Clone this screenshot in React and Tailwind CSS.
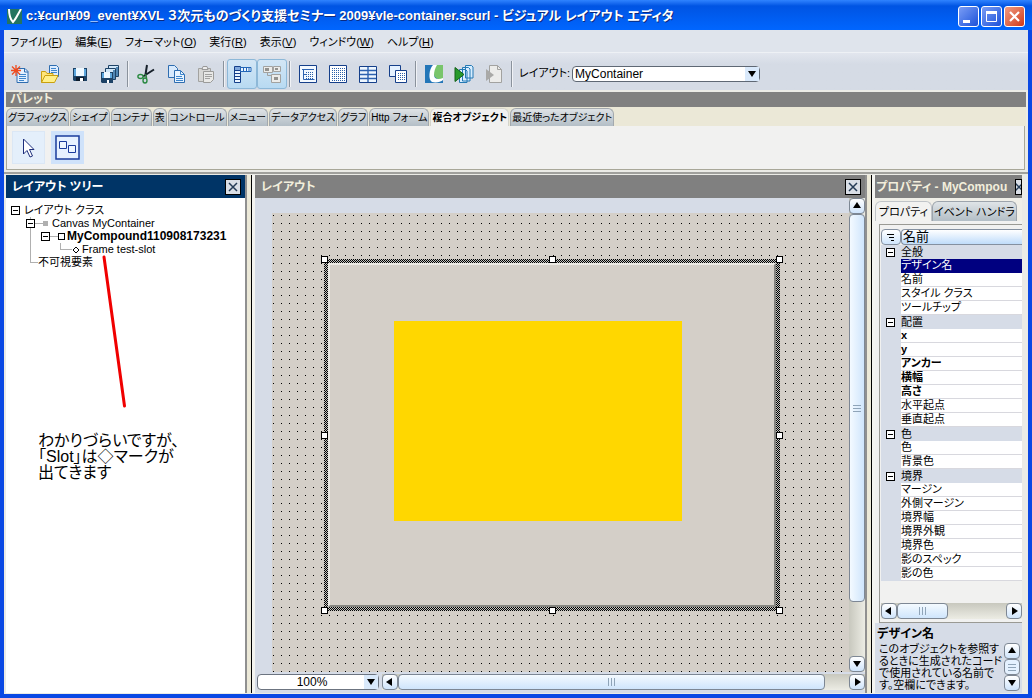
import React, { useState } from 'react';

const menus = [
  ['ファイル', 'F'],
  ['編集', 'E'],
  ['フォーマット', 'O'],
  ['実行', 'R'],
  ['表示', 'V'],
  ['ウィンドウ', 'W'],
  ['ヘルプ', 'H'],
];

const paletteTabs = [
  'グラフィックス',
  'シェイプ',
  'コンテナ',
  '表',
  'コントロール',
  'メニュー',
  'データアクセス',
  'グラフ',
  'Http フォーム',
  '複合オブジェクト',
  '最近使ったオブジェクト',
];

const properties = [
  { name: '全般', group: true },
  { name: 'デザイン名', selected: true },
  { name: '名前' },
  { name: 'スタイル クラス' },
  { name: 'ツールチップ' },
  { name: '配置', group: true },
  { name: 'x', bold: true },
  { name: 'y', bold: true },
  { name: 'アンカー', bold: true },
  { name: '横幅', bold: true },
  { name: '高さ', bold: true },
  { name: '水平起点' },
  { name: '垂直起点' },
  { name: '色', group: true },
  { name: '色' },
  { name: '背景色' },
  { name: '境界', group: true },
  { name: 'マージン' },
  { name: '外側マージン' },
  { name: '境界幅' },
  { name: '境界外観' },
  { name: '境界色' },
  { name: '影のスペック' },
  { name: '影の色' },
];

const Icon = ({ children }) => (
  <svg width="20" height="20" viewBox="0 0 20 20" fill="none" aria-hidden="true">
    {children}
  </svg>
);

const NewIcon = () => (
  <Icon>
    <path d="M7 4.500h8l3 3V18.500H7z" fill="#e4f1ff" stroke="#2e6db0" />
    <path d="M14.500 4.500v3.500H18" stroke="#2e6db0" />
    <path d="M9 10.500h7M9 12.500h7M9 14.500h7M9 16.500h5" stroke="#3f86cc" />
    <path d="M6 1v11M1 6.500h10M2 2.500l8 8M10 2.500l-8 8" stroke="#f04a1c" strokeWidth="1.300" />
  </Icon>
);

const OpenIcon = () => (
  <Icon>
    <path d="M9.500 1.500h7l2 2v9h-9z" fill="#dcecff" stroke="#2e6db0" />
    <path d="M11 4.500h5M11 6.500h6M11 8.500h6" stroke="#3f86cc" />
    <path d="M1.500 18.500v-11h4l1.500 2h6v3" fill="#ffe67a" stroke="#c9a010" />
    <path d="M1.500 18.500l3.500-7h13l-3.500 7z" fill="#fff08a" stroke="#c9a010" />
  </Icon>
);

const SaveIcon = () => (
  <Icon>
    <path d="M3 4h14v13H4l-1-1z" fill="#1d4266" />
    <path d="M4 5h12v7H4z" fill="#5ba5dc" />
    <path d="M6 4h8v8H6z" fill="#eef8ff" />
    <path d="M6 13h8v4H6z" fill="#0e1c2c" />
    <path d="M10 14h3v3h-3z" fill="#fff" />
  </Icon>
);

const SaveAllIcon = () => (
  <Icon>
    <path d="M8.500 1.500h10v11h-10z" fill="#cfe6f8" stroke="#1d4266" />
    <path d="M16 3h2v9h-2z" fill="#4f86b4" />
    <path d="M5.500 4.500h10v11h-10z" fill="#cfe6f8" stroke="#1d4266" />
    <path d="M13 6h2v9h-2z" fill="#4f86b4" />
    <path d="M1 8h12v11H2l-1-1z" fill="#1d4266" />
    <path d="M2 9h10v5H2z" fill="#5ba5dc" />
    <path d="M4 8h6v6H4z" fill="#eef8ff" />
    <path d="M7 16h2v3H7z" fill="#fff" />
  </Icon>
);

const CutIcon = () => (
  <Icon>
    <path d="M11 1l-1.500 9.500M18 5.500L7 12.500" stroke="#16202a" strokeWidth="2" />
    <path d="M9.500 10l1 4" stroke="#2b7a3c" strokeWidth="1.500" />
    <ellipse cx="4.500" cy="12.500" rx="2.600" ry="2" stroke="#2b8a42" strokeWidth="1.400" />
    <ellipse cx="9" cy="16.500" rx="2" ry="2.500" stroke="#2b8a42" strokeWidth="1.400" />
  </Icon>
);

const CopyIcon = () => (
  <Icon>
    <path d="M2.500 1.500h6l3 3v9h-9z" fill="#d8eafd" stroke="#2e6db0" />
    <path d="M8.500 6.500h6l4 4v8h-10z" fill="#e9f4ff" stroke="#2e6db0" />
    <path d="M14.500 6.500v4h4M10 12.500h6M10 14.500h7M10 16.500h7" stroke="#3f86cc" />
  </Icon>
);

const PasteIcon = () => (
  <Icon>
    <path d="M2.500 4.500h12v13h-12z" fill="#d8d8d6" stroke="#a2a2a0" />
    <path d="M6 5.500l1-3h4l1 3z" fill="#eee" stroke="#999" />
    <path d="M7.500 7.500h10v8l-3 3h-7z" fill="#e9e9e7" stroke="#9b9b99" />
    <path d="M9 10.500h7M9 12.500h7M9 14.500h5" stroke="#a2a2a0" />
  </Icon>
);

const RulerIcon = () => (
  <Icon>
    <path d="M2.500 2.500h6v16h-6z" fill="#eaf5ff" stroke="#153f8a" />
    <path d="M3 6.500h5M3 9.500h5M3 12.500h5M3 15.500h5" stroke="#153f8a" />
    <path d="M8.500 3.500h10.500v4H8.500z" fill="#eaf5ff" stroke="#2366b8" />
    <path d="M11.500 4v3M14.500 4v3M17 4v3" stroke="#2366b8" />
    <path d="M3 3h5v3H3z" fill="#7fa8dc" />
  </Icon>
);

const GroupIcon = () => (
  <Icon>
    <path d="M1.500 2.500h9v6h-9zM11.500 2.500h7v5h-7zM9.500 10.500h9v8h-9z" fill="#ececea" stroke="#a2a2a0" />
    <path d="M5.500 8.500v3h4" stroke="#a2a2a0" />
    <path d="M3 4h4v3H3zM13 4h3v2h-3zM12 13h4v3h-4z" fill="#92928f" />
  </Icon>
);

const DotRows = ({ x, y, cols, rows }) =>
  Array.from({ length: rows * cols }, (_, i) => (
    <rect key={i} x={x + (i % cols) * 2} y={y + Math.floor(i / cols) * 2} width="1" height="1" fill="#2a5fa8" />
  ));

const FormIcon = () => (
  <Icon>
    <path d="M1.500 1.500h17v17h-17z" fill="#f3f9ff" stroke="#153f8a" />
    <DotRows x={8} y={8} cols={4} rows={4} />
    <path d="M4 5.500h12M5.500 6v9.500h11M6 10.500h2" stroke="#2c62b0" />
  </Icon>
);

const GridIcon = () => (
  <Icon>
    <path d="M1.500 1.500h17v17h-17z" fill="#fff" stroke="#153f8a" />
    <DotRows x={4} y={4} cols={7} rows={7} />
  </Icon>
);

const TableIcon = () => (
  <Icon>
    <path d="M1.500 2.500h17v16h-17z" fill="#eef7ff" stroke="#153f8a" />
    <path d="M2 6.500h16M2 10.500h16M2 14.500h16M10 3v15" stroke="#2c62b0" strokeWidth="1.400" />
  </Icon>
);

const OverlapIcon = () => (
  <Icon>
    <path d="M1.500 1.500h11v11h-11z" fill="#e4f1ff" stroke="#153f8a" />
    <path d="M7.500 6.500h11v12h-11z" fill="#fff" stroke="#153f8a" />
    <DotRows x={10} y={9} cols={4} rows={4} />
  </Icon>
);

const CurlIcon = () => (
  <Icon>
    <path d="M1 1h18v18H1z" fill="#2376b8" />
    <path d="M10 1h9v14c-5 1-9-1-9-5z" fill="#79c56b" />
    <path d="M9 1C5 5 4 16 8 18c4 1 9 0 11-2v-2c-5 2-9 1-9-3 0-3 1-7 3-10z" fill="#fff" />
  </Icon>
);

const RunIcon = () => (
  <Icon>
    <path d="M11.500 1.500h6l1.500 1.500v11h-7.500zM8.500 3.500h6l1.500 1.500v12H8.500zM5.500 5.500h6l1.500 1.500v11.500H5.500z" fill="#d8eeff" stroke="#2479b4" />
    <path d="M1 3.500v14l9-7z" fill="#279a2c" stroke="#126118" />
  </Icon>
);

const StopIcon = () => (
  <Icon>
    <path d="M5.500 1.500h8l4 4v13h-12z" fill="#ececea" stroke="#a2a2a0" />
    <path d="M13.500 1.500v4h4" stroke="#a2a2a0" />
    <path d="M2 5v12l8-6z" fill="#a9a9a7" />
  </Icon>
);

const toolGroups = [
  [['新規', NewIcon], ['開く', OpenIcon], ['保存', SaveIcon], ['すべて保存', SaveAllIcon]],
  [['切り取り', CutIcon], ['コピー', CopyIcon], ['貼り付け', PasteIcon]],
  [['ルーラー', RulerIcon, true], ['グループ', GroupIcon, true]],
  [['フォーム', FormIcon], ['グリッド', GridIcon], ['表', TableIcon], ['重ね合わせ', OverlapIcon]],
  [['Curl', CurlIcon], ['実行', RunIcon], ['停止', StopIcon]],
];

const arrows = {
  up: 'M1 7h8L5 1z',
  down: 'M1 2h8L5 8z',
  left: 'M7 1v8L1 5z',
  right: 'M3 1v8l6-4z',
};

const Arrow = ({ dir }) => (
  <svg width="10" height="10" viewBox="0 0 10 10" aria-hidden="true">
    <path d={arrows[dir]} fill="#000" />
  </svg>
);

const ScrollButton = ({ dir }) => (
  <button
    aria-label={dir}
    className="flex size-4 shrink-0 items-center justify-center rounded-sm border border-[#7d8794] bg-linear-to-b from-white to-[#cfe4fb]"
  >
    <Arrow dir={dir} />
  </button>
);

const PaneTitle = ({ title, active, narrow }) => (
  <div
    className={`flex h-[23px] shrink-0 items-center justify-between text-xs font-bold ${
      active ? 'bg-[#003466] text-white' : 'bg-[#808080] text-[#f2eedc]'
    } ${narrow ? 'pl-px' : 'pr-1 pl-1.5'}`}
  >
    <h2 className="whitespace-nowrap">{title}</h2>
    <button
      aria-label="閉じる"
      className={`flex h-4 shrink-0 items-center justify-center overflow-hidden border border-black bg-[#d9dee6] ${
        narrow ? 'w-[7px]' : 'w-4'
      }`}
    >
      <svg width="10" height="10" viewBox="0 0 10 10" className="shrink-0" aria-hidden="true">
        <path d="M1 1l8 8M9 1L1 9" stroke="#233a55" strokeWidth="1.500" />
      </svg>
    </button>
  </div>
);

const Splitter = () => (
  <div className="flex w-2.5 shrink-0 bg-[#ece9d8]">
    <div className="w-[2px] bg-[#909090]" />
    <div className="w-[4px]" />
    <div className="w-px bg-black" />
    <div className="w-[3px] bg-[#f4f4f0]" />
  </div>
);

const Toggle = ({ label }) => (
  <button
    aria-label={label}
    className="flex size-[9px] shrink-0 items-center justify-center border border-black bg-white"
  >
    <span className="h-px w-[5px] bg-black" />
  </button>
);

const TreeElbow = () => <span className="h-[7px] w-2 shrink-0 self-start border-b border-[#b0b0b0]" />;

const LayoutTree = () => (
  <section className="flex w-[239px] shrink-0 flex-col bg-white">
    <PaneTitle title="レイアウト ツリー" active />
    <div className="relative flex-1 pt-1.5">
      <ul className="text-[11px] leading-[13px] whitespace-nowrap">
        <li>
          <div className="flex items-center gap-1 pl-[5px]">
            <Toggle label="レイアウト クラス" />
            レイアウト クラス
          </div>
          <ul className="ml-6">
            <li className="border-l border-[#b0b0b0]">
              <div className="-ml-[5px] flex items-center">
                <Toggle label="Canvas" />
                <TreeElbow />
                <span className="mr-1 size-[5px] bg-[#b0b0b0]" />
                Canvas MyContainer
              </div>
              <ul className="ml-2.5">
                <li>
                  <div className="flex items-center text-xs leading-[13px] font-bold">
                    <Toggle label="MyCompound" />
                    <TreeElbow />
                    <span className="mr-0.5 size-[7px] border border-black" />
                    MyCompound110908173231
                  </div>
                  <div className="flex items-center pl-[19px]">
                    <span className="h-[7px] w-3 shrink-0 self-start border-b border-l border-[#b0b0b0]" />
                    <svg width="8" height="8" viewBox="0 0 8 8" className="mr-0.5" aria-hidden="true">
                      <path d="M4 1l3 3-3 3-3-3z" fill="#fff" stroke="#000" />
                    </svg>
                    Frame test-slot
                  </div>
                </li>
              </ul>
            </li>
            <li className="flex items-center">
              <span className="h-[7px] w-2 shrink-0 self-start border-b border-l border-[#b0b0b0]" />
              不可視要素
            </li>
          </ul>
        </li>
      </ul>
      <svg className="absolute top-[57px] left-24" width="26" height="154" viewBox="0 0 26 154" aria-hidden="true">
        <path d="M2 2l20.500 149" stroke="#f00000" strokeWidth="3" strokeLinecap="round" />
      </svg>
      <p className="mt-41 ml-8 text-base leading-4 whitespace-nowrap">
        わかりづらいですが、
        <br />
        「Slot」は◇マークが
        <br />
        出てきます
      </p>
    </div>
  </section>
);

const handles = [
  '-top-[3px] -left-[3px]',
  '-top-[3px] left-1/2 -ml-[3px]',
  '-top-[3px] -right-[3px]',
  'top-1/2 -left-[3px] -mt-[3px]',
  'top-1/2 -right-[3px] -mt-[3px]',
  '-bottom-[3px] -left-[3px]',
  '-bottom-[3px] left-1/2 -ml-[3px]',
  '-bottom-[3px] -right-[3px]',
];

const DesignSurface = () => (
  <div className="relative min-w-0 flex-1 overflow-hidden bg-[#d4cfc8] bg-[conic-gradient(from_270deg_at_1px_1px,#000_90deg,transparent_0)] bg-[length:8px_8px] bg-[position:1px_2px]">
    <div className="absolute top-[46px] left-[52px] h-[352px] w-[456px] bg-[repeating-conic-gradient(#000_0_25%,#c4c4c0_0_50%)] bg-[length:2px_2px] p-1">
      <div className="relative size-full border-2 border-t-[#eceae4] border-r-[#858580] border-b-[#858580] border-l-[#eceae4] bg-[#d4cfc8]">
        <div className="absolute top-[56px] left-[64px] h-[200px] w-[288px] bg-[#ffd700]" />
      </div>
      {handles.map((pos) => (
        <span key={pos} className={`absolute size-[7px] border border-black bg-white ${pos}`} />
      ))}
    </div>
  </div>
);

const Canvas = () => (
  <section className="flex min-w-0 flex-1 flex-col bg-[#d6dce7]">
    <PaneTitle title="レイアウト" />
    <div className="flex min-h-0 flex-1">
      <div className="flex min-w-0 flex-1 pt-[15px] pl-[17px]">
        <DesignSurface />
      </div>
      <div className="flex w-4 flex-col bg-linear-to-r from-[#c8c8be] to-[#ecece4]">
        <ScrollButton dir="up" />
        <div className="flex h-[388px] flex-col items-center justify-center gap-0.5 rounded-sm border border-[#7d8794] bg-linear-to-r from-[#f4faff] to-[#cfe5fc]">
          <span className="h-px w-2 bg-[#8fa4b8]" />
          <span className="h-px w-2 bg-[#8fa4b8]" />
          <span className="h-px w-2 bg-[#8fa4b8]" />
        </div>
        <div className="flex-1" />
        <ScrollButton dir="down" />
      </div>
    </div>
    <div className="flex h-[21px] items-center gap-[3px] pb-px pl-0.5">
      <div className="relative w-[122px]">
        <select
          aria-label="ズーム"
          className="block h-4 w-full appearance-none rounded-sm border border-[#6c7480] bg-white pr-3 text-center text-xs leading-3"
        >
          <option>100%</option>
        </select>
        <span className="pointer-events-none absolute inset-y-px right-px flex w-3.5 items-center justify-center bg-[#d9e9fb]">
          <Arrow dir="down" />
        </span>
      </div>
      <div className="flex h-4 flex-1 bg-linear-to-b from-[#c8c8be] to-[#ecece4]">
        <ScrollButton dir="left" />
        <div className="flex w-[427px] items-center justify-center gap-0.5 rounded-sm border border-[#7d8794] bg-linear-to-b from-[#f4faff] to-[#cfe5fc]">
          <span className="h-2 w-px bg-[#8fa4b8]" />
          <span className="h-2 w-px bg-[#8fa4b8]" />
          <span className="h-2 w-px bg-[#8fa4b8]" />
        </div>
        <div className="flex-1" />
        <ScrollButton dir="right" />
      </div>
    </div>
  </section>
);

const PropertyRow = ({ item }) => {
  if (item.group) {
    return (
      <tr className="h-3.5 bg-[#d6dce7]">
        <td className="p-0 pl-[5px]">
          <Toggle label={item.name} />
        </td>
        <th scope="rowgroup" className="p-0 text-left font-normal">
          {item.name}
        </th>
      </tr>
    );
  }
  return (
    <tr className="h-3.5">
      <td className="bg-[#d6dce7] p-0" />
      <td
        className={`border-b p-0 ${
          item.selected ? 'border-[#000080] bg-[#000080] text-white' : 'border-[#d8d8de] bg-white'
        } ${item.bold ? 'font-bold' : ''}`}
      >
        {item.name}
      </td>
    </tr>
  );
};

const Properties = () => (
  <section className="flex w-[147px] shrink-0 flex-col bg-[#d6dce7]">
    <PaneTitle title="プロパティ - MyCompou" narrow />
    <div className="flex h-[23px] items-end bg-[#f0efe8] text-[11px] leading-4 whitespace-nowrap">
      <button className="h-5 rounded-t-md border border-b-0 border-[#c0c4c8] bg-[#f2f2f0] px-[3px]">プロパティ</button>
      <button className="h-5 rounded-t-md border border-b-0 border-[#9da4ac] bg-linear-to-b from-[#dfe4e7] to-[#b3bec6] px-px">
        イベント ハンドラ
      </button>
    </div>
    <div className="bg-[#f1f1f0] pt-[3px] pl-1">
      <div className="border-t border-b border-l border-[#9a9a94] pb-[3px] pl-px">
        <table className="mt-1 w-full table-fixed border-separate border-spacing-0 text-[11px] leading-[13px] whitespace-nowrap">
          <thead>
            <tr className="h-4">
              <th className="w-5 p-0">
                <button
                  aria-label="並べ替え"
                  className="flex h-4 w-5 items-center justify-center rounded-sm border border-[#8490a0] bg-linear-to-b from-white to-[#cfe5fc]"
                >
                  <svg width="8" height="8" viewBox="0 0 8 8" aria-hidden="true">
                    <path d="M0 1.500h7M2 4.500h5M4 7.500h3" stroke="#000" />
                  </svg>
                </button>
              </th>
              <th className="rounded-l-sm border border-r-0 border-[#8490a0] bg-linear-to-b from-white to-[#bfdcfa] p-0 pl-px text-left text-[13px] leading-3.5 font-normal">
                名前
              </th>
            </tr>
          </thead>
          <tbody>
            {properties.map((item, i) => (
              <PropertyRow key={i} item={item} />
            ))}
          </tbody>
        </table>
        <div className="mt-[22px] flex h-4 bg-linear-to-b from-[#c8c8be] to-[#ecece4]">
          <ScrollButton dir="left" />
          <div className="flex w-[51px] items-center justify-center gap-0.5 rounded-sm border border-[#7d8794] bg-linear-to-b from-[#f4faff] to-[#cfe5fc]">
            <span className="h-2 w-px bg-[#8fa4b8]" />
            <span className="h-2 w-px bg-[#8fa4b8]" />
            <span className="h-2 w-px bg-[#8fa4b8]" />
          </div>
          <div className="flex-1" />
          <ScrollButton dir="right" />
        </div>
      </div>
    </div>
    <h3 className="mt-0.5 ml-0.5 text-xs leading-[18px] font-bold">デザイン名</h3>
    <div className="flex justify-between pr-0.5 pl-1">
      <p className="text-[11px] leading-3 whitespace-nowrap">
        このオブジェクトを参照す
        <br />
        るときに生成されたコード
        <br />
        で使用されている名前で
        <br />
        す。空欄にできます。
      </p>
      <div className="flex flex-col">
        <ScrollButton dir="up" />
        <div className="flex h-4 flex-col items-center justify-center gap-0.5 rounded-sm border border-[#7d8794] bg-[#e4f1ff]">
          <span className="h-px w-2 bg-[#8fa4b8]" />
          <span className="h-px w-2 bg-[#8fa4b8]" />
          <span className="h-px w-2 bg-[#8fa4b8]" />
        </div>
        <ScrollButton dir="down" />
      </div>
    </div>
  </section>
);

const TitleBar = () => (
  <header className="flex h-[30px] shrink-0 items-center bg-linear-to-b from-[#2f83ff] via-[#0054e3] via-20% to-[#0066ff] pt-0.5 pr-[7px] pl-[7px] text-white">
    <svg width="15" height="15" viewBox="0 0 15 15" className="mr-1 shrink-0" aria-hidden="true">
      <path d="M0 0h15v15H0z" fill="#247460" />
      <path d="M2 0c0 6 1 10 4 13 3-3 5-8 8-13" stroke="#fff" strokeWidth="2" fill="none" />
    </svg>
    <h1 className="min-w-0 flex-1 truncate text-[13px] font-bold [text-shadow:1px_1px_0_#0a2a80]">
      c:¥curl¥09_event¥XVL ３次元ものづくり支援セミナー 2009¥vle-container.scurl - ビジュアル レイアウト エディタ
    </h1>
    <div className="flex gap-0.5">
      <button aria-label="最小化" className="size-[21px] rounded-[3px] border border-white bg-linear-to-br from-[#7a9cf5] to-[#1c50d8]">
        <svg width="19" height="19" viewBox="0 0 19 19" aria-hidden="true">
          <path d="M4 13h7v3H4z" fill="#fff" />
        </svg>
      </button>
      <button aria-label="最大化" className="size-[21px] rounded-[3px] border border-white bg-linear-to-br from-[#7a9cf5] to-[#1c50d8]">
        <svg width="19" height="19" viewBox="0 0 19 19" fill="none" aria-hidden="true">
          <path d="M4.500 5v9.500h10V5" stroke="#fff" />
          <path d="M4 5.500h11" stroke="#fff" strokeWidth="3" />
        </svg>
      </button>
      <button aria-label="閉じる" className="size-[21px] rounded-[3px] border border-white bg-linear-to-br from-[#ef9a80] to-[#cf3510]">
        <svg width="19" height="19" viewBox="0 0 19 19" aria-hidden="true">
          <path d="M5 5l9 9M14 5l-9 9" stroke="#fff" strokeWidth="2.200" />
        </svg>
      </button>
    </div>
  </header>
);

const ToolBar = () => (
  <div className="flex h-[37px] shrink-0 items-center bg-linear-to-b from-[#e2e6ee] to-[#d5dbe5] to-30% pt-1 pl-px">
    {toolGroups.map((group, i) => (
      <React.Fragment key={i}>
        {group.map(([label, Glyph, pressed]) => (
          <button
            key={label}
            aria-label={label}
            className={`flex h-[30px] w-[30px] shrink-0 items-center justify-center rounded-[3px] ${
              pressed ? 'border border-[#8db8d8] bg-linear-to-b from-[#d3e6f5] to-[#b8daf2]' : ''
            }`}
          >
            <Glyph />
          </button>
        ))}
        <span className="mx-0.5 h-[26px] w-0.5 border-l border-[#8a929c] bg-[#f0f2f6]" />
      </React.Fragment>
    ))}
    <label htmlFor="layout" className="ml-1 text-[11px] whitespace-nowrap">
      レイアウト:
    </label>
    <div className="relative ml-0.5 w-[188px]">
      <select
        id="layout"
        className="block h-4 w-full appearance-none rounded-sm border border-[#5f6874] bg-white pl-0.5 text-xs leading-3.5"
      >
        <option>MyContainer</option>
      </select>
      <span className="pointer-events-none absolute inset-y-px right-px flex w-3.5 items-center justify-center bg-[#d9e9fb]">
        <Arrow dir="down" />
      </span>
    </div>
  </div>
);

const Palette = () => {
  const [tab, setTab] = useState('複合オブジェクト');

  return (
    <section className="mx-0.5 mt-0.5 shrink-0">
      <h2 className="h-[15px] bg-[#808080] pl-1 text-xs leading-[15px] font-bold text-[#f2eedc]">パレット</h2>
      <div className="flex h-[19px] items-end gap-px bg-[#ebe8d7] text-[10px] leading-[17px] whitespace-nowrap">
        {paletteTabs.map((name) => (
          <button
            key={name}
            onClick={() => setTab(name)}
            className={`h-[18px] shrink-0 rounded-t-md border border-b-0 px-px ${
              name === tab
                ? 'border-[#d4d4cc] bg-[#f1f1f0] font-bold'
                : 'border-[#a3a9ae] bg-linear-to-b from-[#dfe3e6] to-[#b3bec6]'
            }`}
          >
            {name}
          </button>
        ))}
      </div>
      <div className="mr-px flex h-11 items-center gap-1.5 border-r border-b border-l border-[#a8a798] bg-[#f1f1f0] pl-[5px]">
        <button aria-label="選択" className="flex size-[33px] items-center justify-center border border-[#dbe7f5] bg-[#e4effb]">
          <svg width="16" height="22" viewBox="0 0 16 22" aria-hidden="true">
            <path d="M2.500 2v15l3.500-3.500 3 6.500 2.500-1-3-6.500H13z" fill="#fff" stroke="#1e2f7c" />
          </svg>
        </button>
        <button aria-label="複合オブジェクト" className="flex size-[33px] items-center justify-center bg-[#cfe2fa]">
          <svg width="25" height="25" viewBox="0 0 25 25" aria-hidden="true">
            <path d="M1 1h23v23H1z" fill="#e6f1ff" stroke="#1b3c9c" strokeWidth="1.500" />
            <path d="M4.500 6.500h7v7h-7zM13.500 10.500h7v7h-7z" fill="#eef6ff" stroke="#1b3c9c" />
          </svg>
        </button>
      </div>
    </section>
  );
};

const App = () => (
  <div className="flex min-h-screen flex-col bg-[#0a48e4] font-['Liberation_Sans','Noto_Sans_CJK_JP',sans-serif] text-black [font-feature-settings:'palt']">
    <TitleBar />
    <div className="flex flex-1 flex-col border-x-4 border-b-4 border-[#0a48e4] bg-[#ebebe6]">
      <nav className="flex h-[23px] shrink-0 items-center gap-px border-b border-[#eef1f5] bg-[#dfe4ec] pt-0.5 text-[11px] whitespace-nowrap">
        {menus.map(([name, key]) => (
          <button key={key} className="px-1.5">
            {name}(<u>{key}</u>)
          </button>
        ))}
      </nav>
      <ToolBar />
      <Palette />
      <main className="mt-0.5 flex flex-1 border-t-2 border-[#a0a09c] pt-px pr-[6px] pb-px pl-0.5">
        <LayoutTree />
        <Splitter />
        <Canvas />
        <Splitter />
        <Properties />
      </main>
    </div>
  </div>
);

export default App;
